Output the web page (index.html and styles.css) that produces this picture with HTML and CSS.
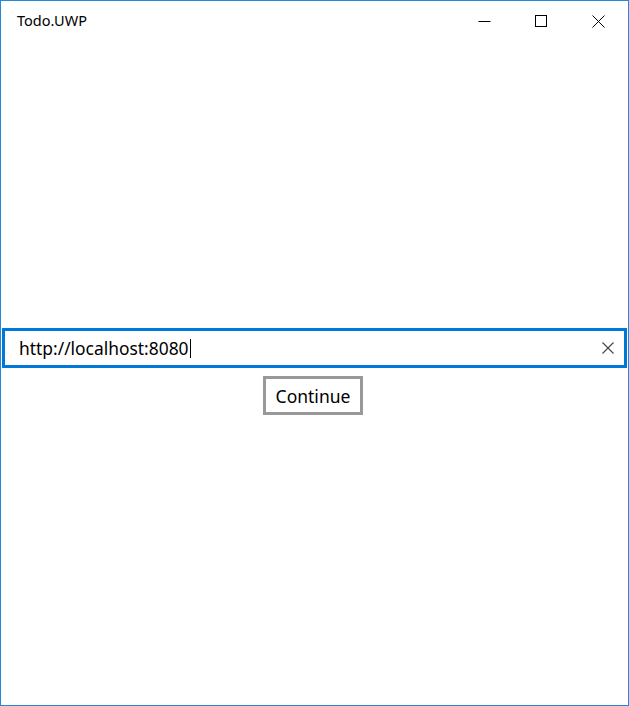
FILE: index.html
```html
<!DOCTYPE html>
<html>
<head>
<meta charset="utf-8">
<link rel="stylesheet" href="styles.css">
</head>
<body>
<div class="window">
  <div class="titlebar">
    <span class="title">Todo.UWP</span>
    <div class="controls">
      <span class="ctl">
        <svg width="46" height="32" viewBox="0 0 46 32"><path d="M17.5 19.5h12" stroke="#000" stroke-width="1"/></svg>
      </span>
      <span class="ctl">
        <svg width="46" height="32" viewBox="0 0 46 32"><rect x="17.5" y="13.5" width="11" height="11" fill="none" stroke="#000" stroke-width="1"/></svg>
      </span>
      <span class="ctl">
        <svg width="46" height="32" viewBox="0 0 46 32"><path d="M17.5 13.5l12 12M29.5 13.5l-12 12" stroke="#000" stroke-width="1"/></svg>
      </span>
    </div>
  </div>
  <div class="content">
    <div class="textbox">
      <span class="value">http://localhost:8080<span class="caret"></span></span>
      <svg class="clear" width="12" height="12" viewBox="0 0 12 12"><path d="M0.5 0.5l11 11M11.5 0.5l-11 11" stroke="#444" stroke-width="1.1"/></svg>
    </div>
    <button class="btn">Continue</button>
  </div>
</div>
</body>
</html>
```
FILE: styles.css
```css
html, body {
  margin: 0;
  padding: 0;
  background: #fff;
}
.window {
  box-sizing: border-box;
  width: 629px;
  height: 706px;
  border: 1px solid #2188da;
  display: flex;
  flex-direction: column;
  font-family: "Noto Sans", "Open Sans", sans-serif;
  color: #000;
}
.titlebar {
  height: 37px;
  display: flex;
  align-items: flex-start;
  justify-content: space-between;
}
.title {
  font-size: 14.5px;
  line-height: 18px;
  margin-top: 10px;
  margin-left: 16px;
}
.controls {
  display: flex;
  margin-right: 2px;
}
.ctl {
  width: 57px;
  height: 32px;
  display: flex;
  justify-content: center;
  margin-top: 1px;
}
.ctl svg { display: block; }
.content {
  flex: 1;
  display: flex;
  flex-direction: column;
  align-items: center;
  padding-top: 290px;
}
.textbox {
  box-sizing: border-box;
  align-self: stretch;
  margin: 0 1px;
  height: 40px;
  border: 3px solid #0078d7;
  display: flex;
  align-items: center;
  justify-content: space-between;
  padding: 0 10px 0 14px;
}
.value {
  font-size: 17.4px;
  line-height: 20px;
  display: flex;
  align-items: center;
}
.caret {
  display: inline-block;
  width: 1px;
  height: 19px;
  background: #000;
  margin-left: 1px;
}
.clear { display: block; }
.btn {
  margin-top: 8px;
  margin-right: 3px;
  box-sizing: border-box;
  width: 100px;
  height: 39px;
  border: 3px solid #999;
  background: #fff;
  font-family: "Noto Sans", "Open Sans", sans-serif;
  font-size: 17.5px;
  color: #000;
  padding: 0;
}
```
